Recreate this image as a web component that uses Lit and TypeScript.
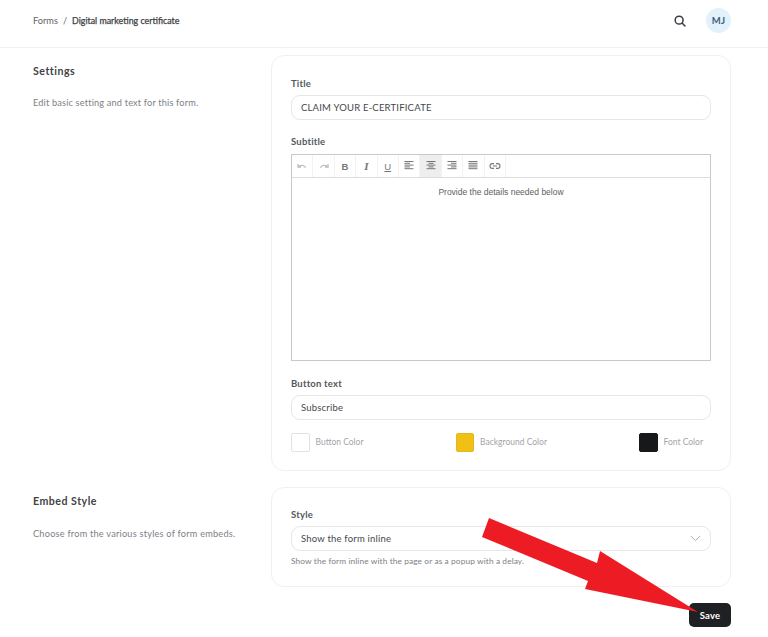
import { LitElement, html, css, svg } from "lit";
import { customElement } from "lit/decorators.js";

const sw = (body: unknown, active = false) => html`<span class="tool ${active ? "on" : ""}"><svg width="12" height="12" viewBox="0 0 12 12" fill="none" stroke="currentColor">${body}</svg></span>`;
const lines = (a: number[][]) => a.map(([x1, x2], i) => svg`<line x1="${x1}" x2="${x2}" y1="${1.5 + i * 1.8}" y2="${1.5 + i * 1.8}" stroke-width="1"/>`);

@customElement("app-root")
export class AppRoot extends LitElement {
  static styles = css`
    :host { display: block; position: relative; width: 768px; height: 637px; overflow: hidden; background: #fff; font-family: "Lato", "Noto Sans", sans-serif; color: #3a3d42; }
    * { box-sizing: border-box; }
    header { height: 48px; border-bottom: 1px solid #f0f0f0; display: flex; align-items: center; padding: 0 37px 6px 33px; font-size: 9.2px; }
    .crumb { flex: 1; display: flex; gap: 5px; color: #5f6368; }
    .crumb b { font-weight: 400; font-size: 8.85px; color: #3c4045; -webkit-text-stroke: .25px #3c4045; }
    .search { display: flex; margin-right: 20px; }
    .avatar { width: 25px; height: 25px; border-radius: 50%; background: #e2f1fa; color: #3f5e7e; font-size: 9.5px; font-weight: 700; display: flex; align-items: center; justify-content: center; letter-spacing: .2px; }
    main { padding: 7px 37px 0 33px; display: flex; flex-direction: column; gap: 16px; }
    .row { display: grid; grid-template-columns: 238px 460px; }
    h2 { margin: 9px 0 0; font-size: 10.6px; font-weight: 700; letter-spacing: .5px; color: #3f4246; line-height: 14px; }
    .side p { margin: 18px 0 0; font-size: 9.2px; letter-spacing: .17px; color: #7d8186; line-height: 13px; }
    .side.low h2 { margin-top: 7px; }
    .side.low p { margin-top: 19px; letter-spacing: .22px; }
    .card { border: 1px solid #f0f0f0; border-radius: 13px; padding: 21px 19px 0; }
    .one { height: 416px; }
    .two { height: 100px; padding-top: 20px; }
    label { display: block; font-size: 9.5px; font-weight: 700; letter-spacing: .2px; color: #55585c; line-height: 13px; }
    .field { margin-top: 5px; height: 25px; border: 1px solid #e6e6e6; border-radius: 9px; display: flex; align-items: center; padding: 0 9px; font-size: 9.5px; letter-spacing: .2px; color: #45484c; }
    .sub { margin-top: 15px; }
    .editor { margin-top: 6px; height: 207px; border: 1px solid #c9c9c9; display: flex; flex-direction: column; }
    .bar { height: 23px; flex: none; border-bottom: 1px solid #dcdcdc; display: flex; }
    .tool { width: 21.4px; border-right: 1px solid #f2f2f2; display: flex; align-items: center; justify-content: center; color: #74777b; font-size: 9.5px; }
    .tool.faint { color: #bdbdbd; }
    .tool.on { background: #eeeeee; }
    .tool b { font-family: "Liberation Sans", sans-serif; font-size: 9.5px; }
    .tool i { font-family: "Liberation Serif", serif; font-weight: 700; font-size: 11px; }
    .tool u { font-family: "Liberation Sans", sans-serif; font-size: 9.5px; }
    .text { font-family: "Liberation Sans", sans-serif; font-size: 8.5px; color: #5e6165; text-align: center; padding-top: 8px; line-height: 12px; }
    .btn-label { margin-top: 16px; }
    .colors { margin-top: 13px; display: flex; justify-content: space-between; padding-right: 8px; }
    .color { display: flex; align-items: center; gap: 6px; font-size: 8.5px; color: #a3a5a8; }
    .chip { width: 18.5px; height: 18.5px; border: 1px solid #e2e2e2; border-radius: 2px; }
    .yellow { background: #f0c014; border-color: #e0b820; }
    .black { background: #17181a; border-color: #17181a; }
    .select { justify-content: space-between; padding-right: 9px; }
    .hint { margin: 4px 0 0; font-size: 8.35px; letter-spacing: .1px; color: #7d8186; line-height: 12px; }
    .actions { display: flex; justify-content: flex-end; }
    button { width: 42px; height: 24px; border: 0; border-radius: 5px; background: #1e2024; color: #fff; font: 700 9.5px "Lato", sans-serif; letter-spacing: .2px; }
    .arrow { position: absolute; left: 0; top: 0; pointer-events: none; }
  `;

  render() {
    return html`
      <header>
        <div class="crumb"><span>Forms</span><span>/</span><b>Digital marketing certificate</b></div>
        <span class="search"><svg width="12" height="12" viewBox="0 0 14 14" fill="none" stroke="#3a3d42" stroke-width="1.8"><circle cx="6" cy="6" r="4.6"/><line x1="9.4" y1="9.4" x2="12.8" y2="12.8" stroke-linecap="round"/></svg></span>
        <div class="avatar">MJ</div>
      </header>
      <main>
        <section class="row">
          <div class="side"><h2>Settings</h2><p>Edit basic setting and text for this form.</p></div>
          <div class="card one">
            <label>Title</label>
            <div class="field">CLAIM YOUR E-CERTIFICATE</div>
            <label class="sub">Subtitle</label>
            <div class="editor">
              <div class="bar">
                <span class="tool faint"><svg width="12" height="12" viewBox="0 0 12 12" fill="none" stroke="currentColor" stroke-width="1.3"><path d="M2 4v3h3M2.3 6.8C4.5 4.6 7.5 4.8 9.8 7.6"/></svg></span>
                <span class="tool faint"><svg width="12" height="12" viewBox="0 0 12 12" fill="none" stroke="currentColor" stroke-width="1.3"><path d="M10 4v3H7M9.7 6.8C7.5 4.6 4.5 4.8 2.2 7.6"/></svg></span>
                <span class="tool"><b>B</b></span>
                <span class="tool"><i>I</i></span>
                <span class="tool"><u>U</u></span>
                ${sw(lines([[1.5,10.5],[1.5,7],[1.5,10.5],[1.5,7],[1.5,10.5]]))}
                ${sw(lines([[1.5,10.5],[3.5,8.5],[1.5,10.5],[3.5,8.5],[1.5,10.5]]), true)}
                ${sw(lines([[1.5,10.5],[5,10.5],[1.5,10.5],[5,10.5],[1.5,10.5]]))}
                ${sw(lines([[1.5,10.5],[1.5,10.5],[1.5,10.5],[1.5,10.5],[1.5,10.5]]))}
                <span class="tool"><svg width="12" height="12" viewBox="0 0 12 12" fill="none" stroke="currentColor" stroke-width="1.1"><path d="M5 3.6H3.4a2.4 2.4 0 0 0 0 4.8H5M7 3.6h1.6a2.4 2.4 0 0 1 0 4.8H7M3.8 6h4.4"/></svg></span>
              </div>
              <div class="text">Provide the details needed below</div>
            </div>
            <label class="btn-label">Button text</label>
            <div class="field">Subscribe</div>
            <div class="colors">
              <div class="color"><span class="chip"></span>Button Color</div>
              <div class="color"><span class="chip yellow"></span>Background Color</div>
              <div class="color"><span class="chip black"></span>Font Color</div>
            </div>
          </div>
        </section>
        <section class="row">
          <div class="side low"><h2>Embed Style</h2><p>Choose from the various styles of form embeds.</p></div>
          <div class="card two">
            <label>Style</label>
            <div class="field select"><span>Show the form inline</span>
              <svg width="11" height="7" viewBox="0 0 11 7" fill="none" stroke="#a9abae" stroke-width="1"><path d="M.8 1l4.7 4.6L10.2 1"/></svg></div>
            <p class="hint">Show the form inline with the page or as a popup with a delay.</p>
          </div>
        </section>
        <div class="actions"><button>Save</button></div>
      </main>
      <svg class="arrow" width="768" height="637"><polygon fill="#ed1c24" points="489,518 597,563 600,551 698,612 585,589 588,581 482,537"/></svg>
    `;
  }
}
